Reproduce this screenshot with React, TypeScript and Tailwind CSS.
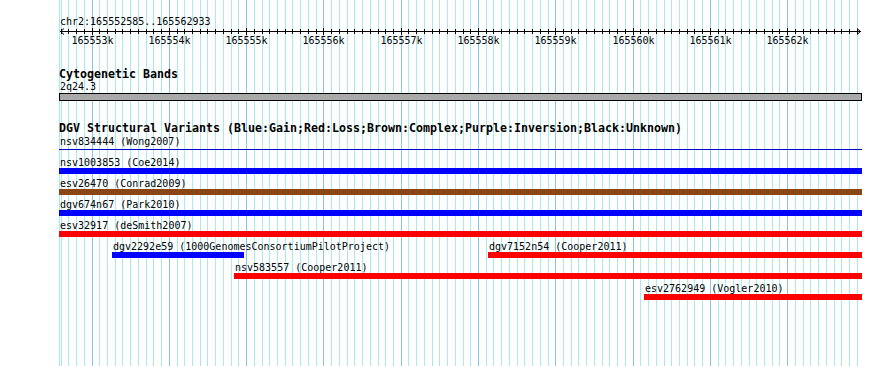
import React from 'react'

const START = 165552585
const END = 165562933
const X0 = 59 // left edge of the drawing panel
const W = 803 // panel width in px
const PX_PER_KB = 77.3

// x position (page px) of a base pair
function bpToX(bp: number) {
  return 92 + ((bp - 165553000) * PX_PER_KB) / 1000
}

type VariantType = 'gain' | 'loss' | 'complex'

interface Variant {
  id: string
  study: string
  type: VariantType
  start: number
  end: number
}

const TYPE_CLASS: Record<VariantType, string> = {
  gain: 'bg-[#0000ff]',
  loss: 'bg-[#ff0000]',
  complex: 'bg-[#8b4513]',
}

// each inner array is one packed row of the track
const rows: Variant[][] = [
  [{ id: 'nsv1003853', study: 'Coe2014', type: 'gain', start: 165480000, end: 165610000 }],
  [{ id: 'esv26470', study: 'Conrad2009', type: 'complex', start: 165500000, end: 165600000 }],
  [{ id: 'dgv674n67', study: 'Park2010', type: 'gain', start: 165510000, end: 165590000 }],
  [{ id: 'esv32917', study: 'deSmith2007', type: 'loss', start: 165520000, end: 165580000 }],
  [
    { id: 'dgv2292e59', study: '1000GenomesConsortiumPilotProject', type: 'gain', start: 165553259, end: 165554966 },
    { id: 'dgv7152n54', study: 'Cooper2011', type: 'loss', start: 165558123, end: 165570000 },
  ],
  [{ id: 'nsv583557', study: 'Cooper2011', type: 'loss', start: 165554837, end: 165575000 }],
  [{ id: 'esv2762949', study: 'Vogler2010', type: 'loss', start: 165560141, end: 165580000 }],
]

function featureBox(start: number, end: number) {
  const l = start <= START ? 0 : Math.round(bpToX(start)) - X0
  const r = end >= END ? W : Math.round(bpToX(end)) - X0
  return { left: l, width: r - l }
}

const gridPositions: { x: number; major: boolean }[] = []
for (let bp = 165552600; bp <= END; bp += 100) {
  const x = Math.floor(bpToX(bp))
  if (x > X0 + W - 2) break
  gridPositions.push({ x, major: bp % 1000 === 0 })
}

function Grid() {
  return (
    <svg className="absolute inset-0" width={890} height={366} shapeRendering="crispEdges">
      <line x1={X0 + 0.5} x2={X0 + 0.5} y1={0} y2={366} stroke="#a8eaf0" />
      {gridPositions.map((g) => (
        <line
          key={g.x}
          x1={g.x + 0.5}
          x2={g.x + 0.5}
          y1={0}
          y2={366}
          stroke={g.major ? '#84c6ee' : '#a8eaf0'}
        />
      ))}
    </svg>
  )
}

function Ruler() {
  return (
    <div className="relative h-[19px]">
      <svg className="absolute left-0 top-0" width={W} height={8} shapeRendering="crispEdges">
        <line x1={1} x2={802} y1={4.5} y2={4.5} stroke="#000" />
        {gridPositions.map((g) => (
          <line
            key={g.x}
            x1={g.x - X0 + 0.5}
            x2={g.x - X0 + 0.5}
            y1={g.major ? 1 : 2}
            y2={g.major ? 8 : 7}
            stroke="#000"
          />
        ))}
        <polyline points="5,1.5 1.5,4.5 5,7.5" fill="none" stroke="#000" shapeRendering="auto" />
        <polyline points="798,1.5 801.5,4.5 798,7.5" fill="none" stroke="#000" shapeRendering="auto" />
      </svg>
      {gridPositions
        .filter((g) => g.major)
        .map((g, i) => (
          <span
            key={g.x}
            className="absolute top-[8px] -translate-x-1/2 whitespace-nowrap"
            style={{ left: g.x - X0 + 0.5 }}
          >
            {165553 + i}k
          </span>
        ))}
    </div>
  )
}

function VariantRow({ items }: { items: Variant[] }) {
  return (
    <div className="relative h-[21px]">
      {items.map((v) => {
        const box = featureBox(v.start, v.end)
        return (
          <div key={v.id} className="absolute top-0 flex flex-col" style={{ left: box.left, width: box.width }}>
            <span className="h-[11px] whitespace-nowrap pl-px">
              {v.id} ({v.study})
            </span>
            <div className={`h-[6px] ${TYPE_CLASS[v.type]}`} />
          </div>
        )
      })}
    </div>
  )
}

export default function App() {
  return (
    <div className="relative h-[366px] w-[890px] overflow-hidden bg-white font-['DejaVu_Sans_Mono',monospace] text-[10px] leading-[11px] text-black">
      <Grid />
      <div className="relative ml-[59px] flex w-[803px] flex-col">
        <div className="mt-[16px] h-[11px] pl-px">chr2:165552585..165562933</div>
        <Ruler />

        <div className="mt-[21px] h-[14px] text-[11.63px] font-bold leading-[14px]">Cytogenetic Bands</div>
        <div className="h-[11px] pl-px">2q24.3</div>
        <div className="mt-px h-[8px] border border-black bg-[#a9a9a9]" />

        <div className="mt-[20px] h-[14px] whitespace-nowrap text-[11.63px] font-bold leading-[14px]">
          DGV Structural Variants (Blue:Gain;Red:Loss;Brown:Complex;Purple:Inversion;Black:Unknown)
        </div>
        <div className="mt-px h-[11px] pl-px">nsv834444 (Wong2007)</div>
        <div className="mt-[2px] h-px bg-[#0000c0]" />

        <div className="mt-[7px] flex flex-col">
          {rows.map((r, i) => (
            <VariantRow key={i} items={r} />
          ))}
        </div>
      </div>
    </div>
  )
}
